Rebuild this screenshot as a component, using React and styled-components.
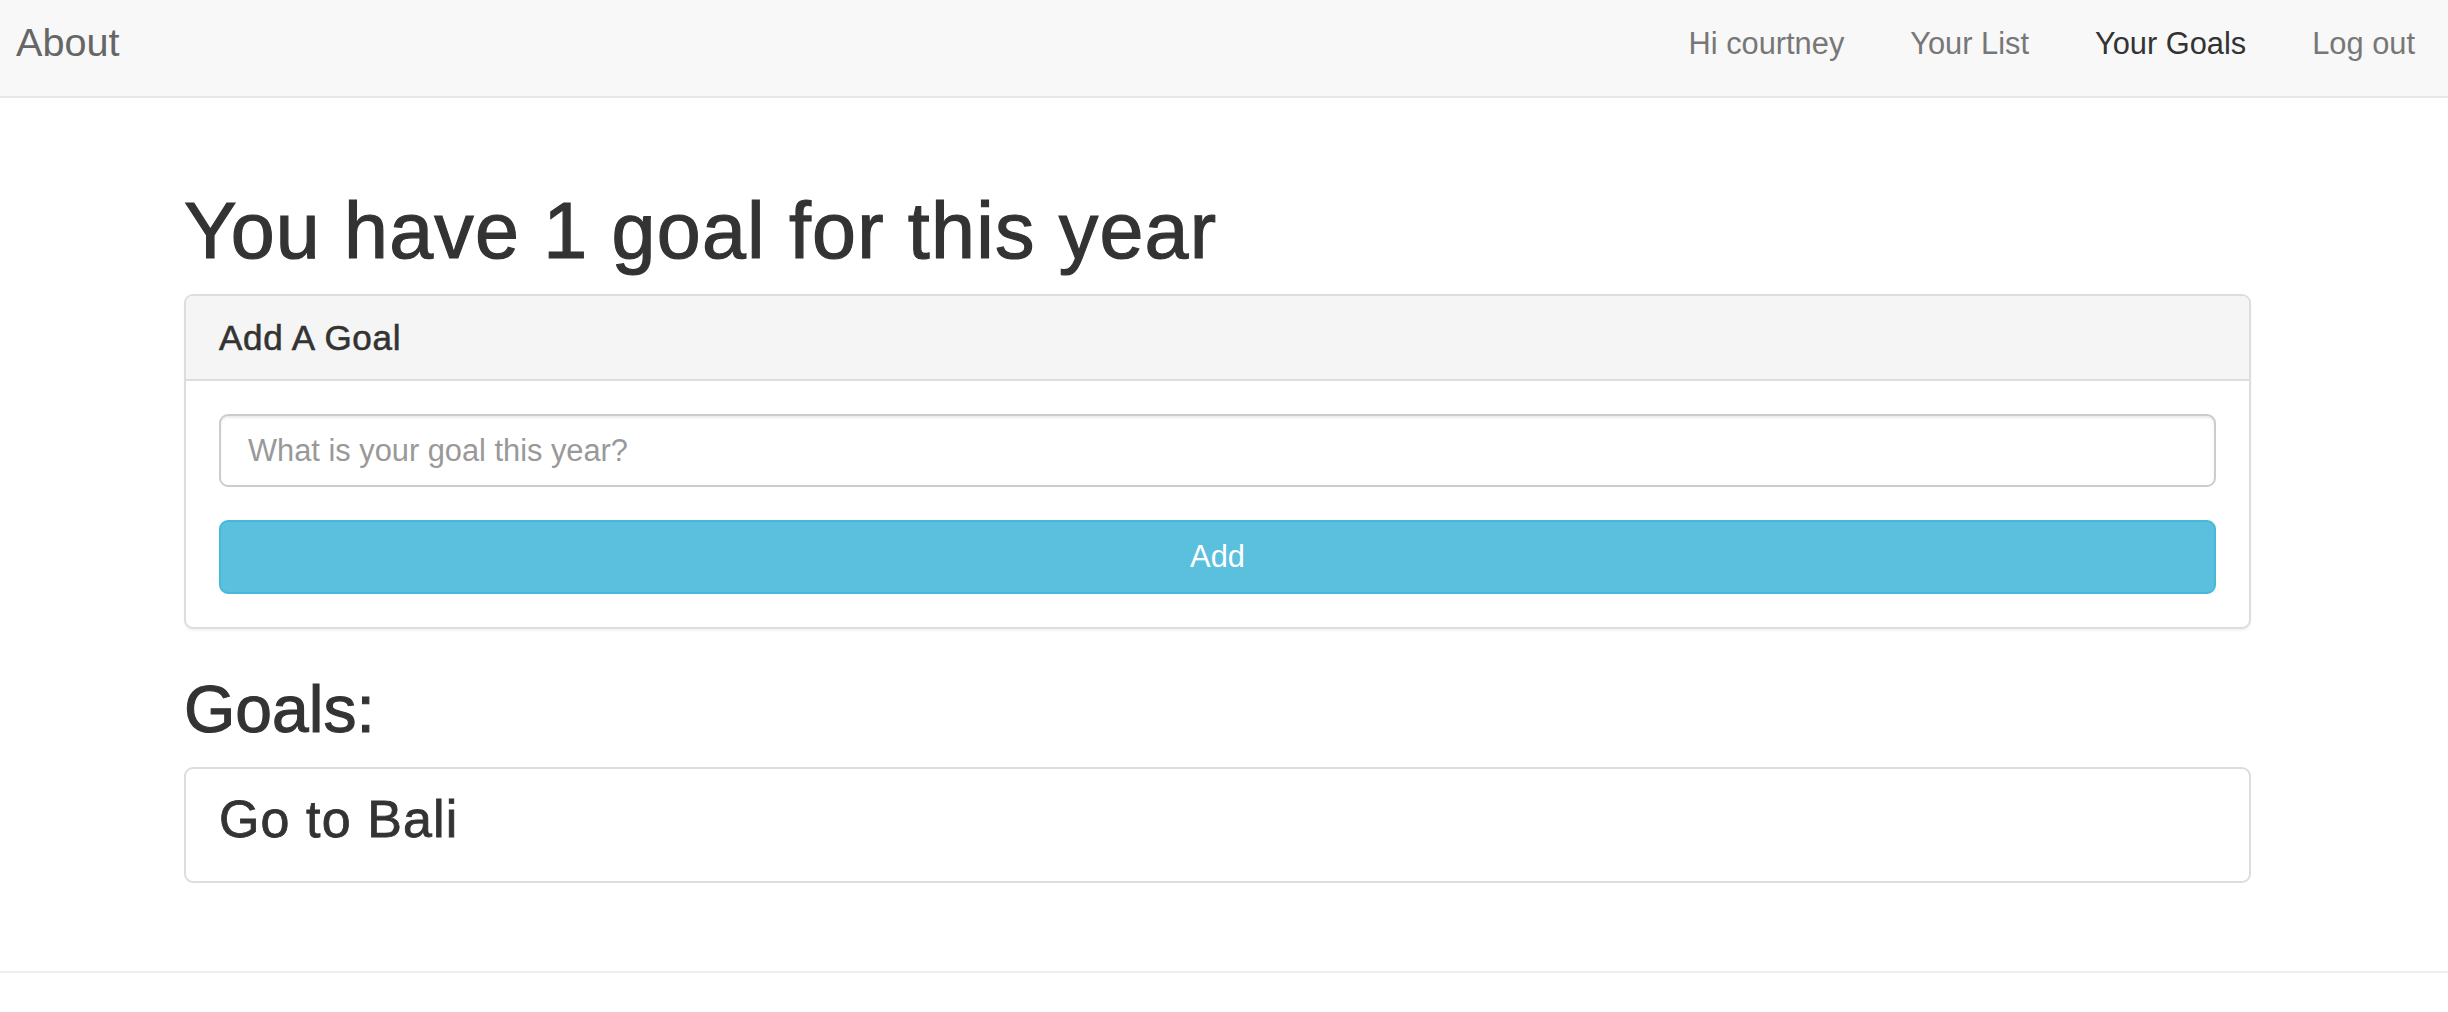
import React from "react";
import styled, { createGlobalStyle } from "styled-components";

const GlobalStyle = createGlobalStyle`
  html, body {
    margin: 0;
    padding: 0;
    background: #fff;
  }
  body {
    font-family: "Liberation Sans", Arial, Helvetica, sans-serif;
    color: #333;
  }
  * {
    box-sizing: border-box;
  }
`;

const Navbar = styled.nav`
  box-sizing: content-box;
  height: 96px;
  display: flex;
  justify-content: space-between;
  align-items: flex-start;
  background: #f8f8f8;
  border-bottom: 2px solid #e7e7e7;
`;

const Brand = styled.a`
  padding: 20px 16px 0;
  font-size: 39.6px;
  line-height: 44px;
  color: #666;
  text-decoration: none;
`;

const NavList = styled.ul`
  display: flex;
  margin: 0;
  padding: 0;
  list-style: none;
`;

const NavItem = styled.li`
  padding: 22px 33px 0;
  font-size: 30.8px;
  line-height: 44px;
  color: ${({ active }) => (active ? "#333" : "#777")};
  cursor: pointer;
`;

const Container = styled.main`
  width: 2067px;
  margin-left: 184px;
`;

// headings are Helvetica Neue medium in the original: thicken Liberation a bit
const Title = styled.h1`
  margin: 89px 0 20px;
  font-size: 79px;
  line-height: 87px;
  font-weight: 400;
  letter-spacing: 1.2px;
  -webkit-text-stroke: 1.2px #333;
  color: #333;
`;

const Panel = styled.section`
  border: 2px solid #ddd;
  border-radius: 9px;
  background: #fff;
  box-shadow: 0 2px 2px rgba(0, 0, 0, 0.05);
`;

const PanelHeading = styled.div`
  padding: 22px 33px;
  background: #f5f5f5;
  border-bottom: 2px solid #ddd;
  border-radius: 7px 7px 0 0;
`;

const PanelTitle = styled.h3`
  margin: 0;
  font-size: 35px;
  line-height: 39px;
  font-weight: 400;
  letter-spacing: 0.7px;
  -webkit-text-stroke: 0.6px #333;
  color: #333;
`;

const PanelBody = styled.form`
  display: flex;
  flex-direction: column;
  gap: 33px;
  padding: 33px;
`;

const Input = styled.input`
  width: 100%;
  height: 73px;
  padding: 0 27px;
  border: 2px solid #ccc;
  border-radius: 9px;
  font-family: inherit;
  font-size: 30.8px;
  color: #555;
  box-shadow: inset 0 2px 2px rgba(0, 0, 0, 0.075);
  outline: none;
  &::placeholder {
    color: #999;
  }
`;

const AddButton = styled.button`
  width: 100%;
  height: 74px;
  border: 2px solid #46b8da;
  border-radius: 9px;
  background: #5bc0de;
  color: #fff;
  font-family: inherit;
  font-size: 30.8px;
  cursor: pointer;
`;

const SectionTitle = styled.h2`
  margin: 44px 0 21px;
  font-size: 66px;
  line-height: 73px;
  font-weight: 400;
  -webkit-text-stroke: 1.1px #333;
  color: #333;
`;

const GoalCard = styled.div`
  padding: 22px 33px 33px;
  border: 2px solid #ddd;
  border-radius: 9px;
  background: #fff;
`;

const GoalText = styled.h3`
  margin: 0;
  font-size: 52px;
  line-height: 57px;
  font-weight: 400;
  letter-spacing: 1.1px;
  -webkit-text-stroke: 0.8px #333;
  color: #333;
`;

const Footer = styled.footer`
  margin-top: 88px;
  border-top: 2px solid #eee;
`;

const links = [
  { label: "Hi courtney" },
  { label: "Your List" },
  { label: "Your Goals", active: true },
  { label: "Log out" },
];

export default function App() {
  const goals = ["Go to Bali"];
  return (
    <>
      <GlobalStyle />
      <Navbar>
        <Brand href="#">About</Brand>
        <NavList>
          {links.map((l) => (
            <NavItem key={l.label} active={l.active}>
              {l.label}
            </NavItem>
          ))}
        </NavList>
      </Navbar>
      <Container>
        <Title>
          You have {goals.length} goal for this year
        </Title>
        <Panel>
          <PanelHeading>
            <PanelTitle>Add A Goal</PanelTitle>
          </PanelHeading>
          <PanelBody onSubmit={(e) => e.preventDefault()}>
            <Input placeholder="What is your goal this year?" />
            <AddButton type="submit">Add</AddButton>
          </PanelBody>
        </Panel>
        <SectionTitle>Goals:</SectionTitle>
        {goals.map((g) => (
          <GoalCard key={g}>
            <GoalText>{g}</GoalText>
          </GoalCard>
        ))}
      </Container>
      <Footer />
    </>
  );
}
